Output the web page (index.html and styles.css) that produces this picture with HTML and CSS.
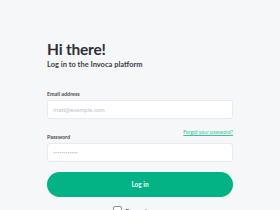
FILE: index.html
```html
<!DOCTYPE html>
<html>
<head>
<meta charset="utf-8">
<link rel="stylesheet" href="styles.css">
</head>
<body>
<main class="page">
  <form class="card">
    <h1 class="title">Hi there!</h1>
    <p class="subtitle">Log in to the Invoca platform</p>
    <div class="field field-email">
      <div class="label-row"><label class="label">Email address</label></div>
      <input class="input" type="text" placeholder="matt@example.com">
    </div>
    <div class="field field-pass">
      <div class="label-row"><label class="label">Password</label><a class="forgot" href="#">Forgot your password?</a></div>
      <input class="input" type="password" placeholder="••••••••••••">
    </div>
    <button class="btn" type="button">Log in</button>
    <div class="remember"><span class="check"></span><span class="remember-text">Remember me</span></div>
  </form>
</main>
</body>
</html>
```
FILE: styles.css
```css
html, body { margin: 0; padding: 0; }
body { background: #f6f7f9; font-family: Lato, "Noto Sans", sans-serif; color: #2f3336; }
.page { display: flex; justify-content: center; padding-top: 40px; }
.card { width: 186px; display: flex; flex-direction: column; }
.title { margin: 0; font-size: 15.5px; font-weight: 700; line-height: 18px; color: #2d3134; letter-spacing: -0.2px; }
.subtitle { margin: 2px 0 0; font-size: 7.5px; font-weight: 700; line-height: 10px; color: #3a3e42; }
.field { display: flex; flex-direction: column; }
.field-email { margin-top: 20px; }
.field-pass { margin-top: 9px; }
.label-row { display: flex; justify-content: space-between; align-items: flex-end; min-height: 8px; margin-bottom: 2px; }
.label { font-size: 5.4px; font-weight: 700; color: #4a4e52; line-height: 8px; }
.forgot { font-size: 5px; color: #36c49d; text-decoration: underline; line-height: 8px; margin-bottom: 5px; }
.input { box-sizing: border-box; height: 19px; width: 100%; border: 1px solid #e7eaee; border-radius: 3px; background: #fff; padding: 0 5px; font-family: "Noto Sans", sans-serif; font-size: 5.5px; color: #333; outline: none; }
.input::placeholder { color: #bcc0c5; }
.btn { margin-top: 10px; height: 25px; border: none; border-radius: 13px; background: #03b385; color: #f2fbf8; font-family: Lato, sans-serif; font-size: 6.5px; font-weight: 700; padding: 0; }
.remember { display: flex; align-items: center; justify-content: center; gap: 4px; margin-top: 9px; margin-right: 4px; }
.check { width: 7px; height: 7px; border: 1px solid #8a8f95; border-radius: 2px; background: #fff; }
.remember-text { font-size: 6px; color: #3c4044; }
```
